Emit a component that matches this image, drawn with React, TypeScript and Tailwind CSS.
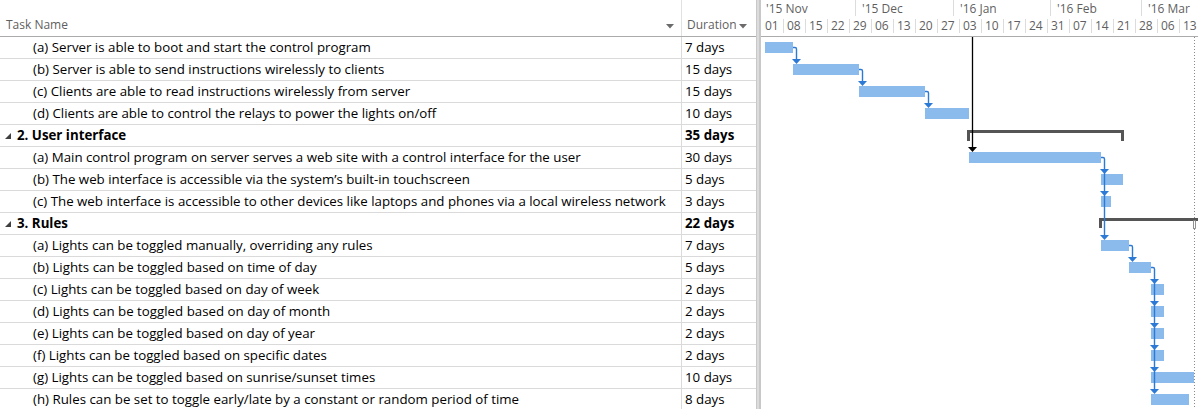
import React from 'react';

type Row = { name: string; duration: string; summary?: boolean };

const rows: Row[] = [
  { name: '(a) Server is able to boot and start the control program', duration: '7 days' },
  { name: '(b) Server is able to send instructions wirelessly to clients', duration: '15 days' },
  { name: '(c) Clients are able to read instructions wirelessly from server', duration: '15 days' },
  { name: '(d) Clients are able to control the relays to power the lights on/off', duration: '10 days' },
  { name: '2. User interface', duration: '35 days', summary: true },
  { name: '(a) Main control program on server serves a web site with a control interface for the user', duration: '30 days' },
  { name: '(b) The web interface is accessible via the system\u2019s built-in touchscreen', duration: '5 days' },
  { name: '(c) The web interface is accessible to other devices like laptops and phones via a local wireless network', duration: '3 days' },
  { name: '3. Rules', duration: '22 days', summary: true },
  { name: '(a) Lights can be toggled manually, overriding any rules', duration: '7 days' },
  { name: '(b) Lights can be toggled based on time of day', duration: '5 days' },
  { name: '(c) Lights can be toggled based on day of week', duration: '2 days' },
  { name: '(d) Lights can be toggled based on day of month', duration: '2 days' },
  { name: '(e) Lights can be toggled based on day of year', duration: '2 days' },
  { name: '(f) Lights can be toggled based on specific dates', duration: '2 days' },
  { name: '(g) Lights can be toggled based on sunrise/sunset times', duration: '10 days' },
  { name: '(h) Rules can be set to toggle early/late by a constant or random period of time', duration: '8 days' },
];

const weeks = ['01', '08', '15', '22', '29', '06', '13', '20', '27', '03', '10', '17', '24', '31', '07', '14', '21', '28', '06', '13'];

// page coordinates: [x1, x2, rowIndex]
const bars: [number, number, number][] = [
  [765, 793, 0],
  [793, 859, 1],
  [859, 925, 2],
  [925, 969, 3],
  [969, 1101, 5],
  [1101, 1123, 6],
  [1101, 1111, 7],
  [1101, 1129, 9],
  [1129, 1151, 10],
  [1151, 1164, 11],
  [1151, 1164, 12],
  [1151, 1164, 13],
  [1151, 1164, 14],
  [1151, 1194, 15],
  [1151, 1189, 16],
];

const rowTop = (i: number) => 37 + i * 22;

const Arrow = ({ x, y, color }: { x: number; y: number; color: string }) => (
  <polygon points={`${x - 4.5},${y} ${x + 4.5},${y} ${x},${y + 5}`} fill={color} />
);

const Caret = () => (
  <svg width="8" height="5" viewBox="0 0 8 5" className="shrink-0">
    <polygon points="0,0 8,0 4,4.5" fill="#6b6b6b" />
  </svg>
);

const Collapse = () => (
  <svg width="6" height="6" viewBox="0 0 6 6" className="shrink-0">
    <polygon points="6,0 6,6 0,6" fill="#404040" />
  </svg>
);

const Link = ({ x1, y1, x2, yEnd, targets }: { x1: number; y1: number; x2: number; yEnd: number; targets: number[] }) => {
  const blue = '#2c7ad6';
  return (
    <g>
      <path d={`M${x1} ${y1 + 0.5} H${x2 - 1} Q${x2 + 0.5} ${y1 + 0.5} ${x2 + 0.5} ${y1 + 2} V${yEnd}`} stroke={blue} strokeWidth="1.4" fill="none" />
      {targets.map((t) => (
        <Arrow key={t} x={x2 + 0.5} y={rowTop(t)} color={blue} />
      ))}
    </g>
  );
};

export default function App() {
  const font = { fontFamily: '"Open Sans", "Noto Sans", sans-serif' };
  return (
    <div className="w-[1198px] h-[409px] overflow-hidden flex bg-white text-black" style={font}>
      {/* table */}
      <div className="w-[756px] flex flex-col shrink-0">
        <div className="h-[37px] flex border-b border-[#ababab] text-[12px] text-[#5f5f5f] shrink-0">
          <div className="w-[682px] border-r border-[#e1e1e1] flex items-end pb-[2px] pl-[6px] pr-[7px]">
            <span className="flex-1">Task Name</span>
            <span className="mb-[5px]"><Caret /></span>
          </div>
          <div className="flex-1 flex items-end pb-[2px] pl-[5px] pr-[9px]">
            <span className="flex-1">Duration</span>
            <span className="mb-[5px]"><Caret /></span>
          </div>
        </div>
        {rows.map((r, i) => (
          <div key={i} className={`h-[22px] flex border-b border-[#dadada] text-[13.3px] shrink-0 ${r.summary ? 'font-bold' : ''}`}>
            <div className={`w-[682px] border-r border-[#dadada] flex items-center pt-[1px] whitespace-nowrap overflow-hidden ${r.summary ? 'pl-[5px] gap-[6px]' : 'pl-[33px]'}`}>
              {r.summary && <Collapse />}
              <span>{r.name}</span>
            </div>
            <div className="flex-1 flex items-center pt-[1px] pl-[3px] whitespace-nowrap">{r.duration}</div>
          </div>
        ))}
      </div>

      {/* splitter */}
      <div className="w-[4px] shrink-0 bg-[#dcdcdc] border-x border-[#c8c8c8]" />

      {/* gantt */}
      <div className="flex-1 flex flex-col overflow-hidden border-l border-[#c8c8c8]">
        <div className="h-[37px] shrink-0 border-b border-[#ababab] flex flex-col text-[12px] text-[#5f5f5f]">
          <div className="h-[16px] flex">
            <div className="w-[94px] shrink-0 pl-[5px] pt-[1px] leading-[15px]">'15 Nov</div>
            <div className="w-[98px] shrink-0 pl-[6px] pt-[1px] leading-[15px] border-l border-[#dcdcdc]">'15 Dec</div>
            <div className="w-[97px] shrink-0 pl-[6px] pt-[1px] leading-[15px] border-l border-[#dcdcdc]">'16 Jan</div>
            <div className="w-[91px] shrink-0 pl-[6px] pt-[1px] leading-[15px] border-l border-[#dcdcdc]">'16 Feb</div>
            <div className="w-[60px] shrink-0 pl-[6px] pt-[1px] leading-[15px] border-l border-[#dcdcdc]">'16 Mar</div>
          </div>
          <div className="h-[14px] mt-[3px] flex">
            {weeks.map((w, i) => (
              <div key={i} className={`w-[22px] shrink-0 leading-[14px] ${i === 0 ? 'pl-[4px]' : 'pl-[3px] border-l border-[#dcdcdc]'}`}>{w}</div>
            ))}
          </div>
        </div>
        <svg width="437" height="372" viewBox="761 37 437 372" className="block shrink-0">
          <line x1="1194.5" y1="37" x2="1194.5" y2="409" stroke="#8a8a8a" strokeDasharray="1 2" />
          {/* summary 2 */}
          <path d="M967 130 H1124 V141 H1121 V133 H970 V141 H967 Z" fill="#555555" />
          {/* summary 3 */}
          <path d="M1099 218 H1198 V221 H1102 V228 H1099 Z" fill="#555555" />
          <rect x="1193.5" y="220.5" width="2" height="8" fill="white" stroke="#777" strokeWidth="0.8" />
          {bars.map(([a, b, r], i) => (
            <rect key={i} x={a} y={rowTop(r) + 5} width={b - a} height="11" fill="#8abbec" />
          ))}
          <line x1="972.5" y1="37" x2="972.5" y2="148" stroke="#000" strokeWidth="1.3" />
          <Arrow x={972.5} y={147} color="#000" />
          <Link x1={793} y1={47} x2={796} yEnd={59} targets={[1]} />
          <Link x1={859} y1={69} x2={862} yEnd={81} targets={[2]} />
          <Link x1={925} y1={91} x2={928} yEnd={103} targets={[3]} />
          <Link x1={1101} y1={157} x2={1104} yEnd={235} targets={[6, 7, 9]} />
          <Link x1={1129} y1={245} x2={1132} yEnd={257} targets={[10]} />
          <Link x1={1151} y1={267} x2={1154} yEnd={389} targets={[11, 12, 13, 14, 15, 16]} />
        </svg>
      </div>
    </div>
  );
}
